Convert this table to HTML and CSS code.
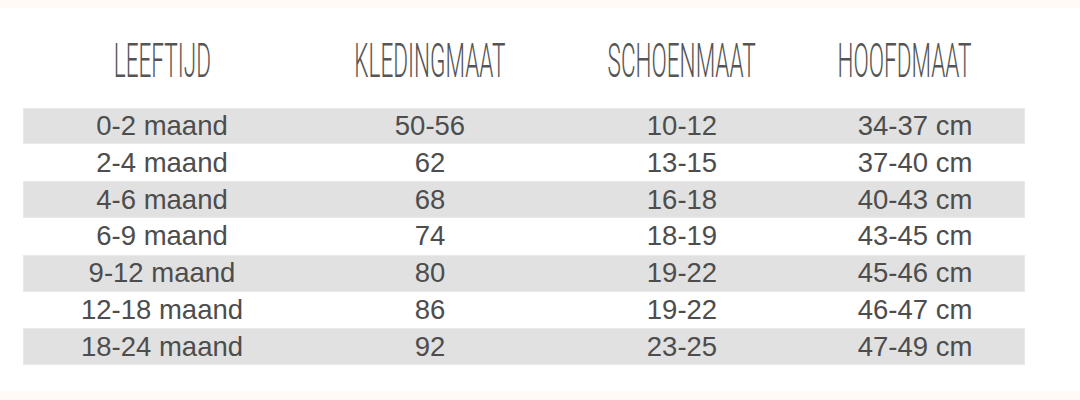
FILE: index.html
```html
<!DOCTYPE html>
<html lang="nl">
<head>
<meta charset="utf-8">
<title>Maattabel</title>
<link rel="stylesheet" href="styles.css">
</head>
<body>
<main class="panel">
  <div class="size-table">
    <div class="row head">
      <div class="cell"><span class="hd">Leeftijd</span></div>
      <div class="cell"><span class="hd">Kledingmaat</span></div>
      <div class="cell"><span class="hd">Schoenmaat</span></div>
      <div class="cell"><span class="hd hd-last">Hoofdmaat</span></div>
    </div>
    <div class="row alt">
      <div class="cell">0-2 maand</div><div class="cell">50-56</div><div class="cell">10-12</div><div class="cell">34-37 cm</div>
    </div>
    <div class="row">
      <div class="cell">2-4 maand</div><div class="cell">62</div><div class="cell">13-15</div><div class="cell">37-40 cm</div>
    </div>
    <div class="row alt">
      <div class="cell">4-6 maand</div><div class="cell">68</div><div class="cell">16-18</div><div class="cell">40-43 cm</div>
    </div>
    <div class="row">
      <div class="cell">6-9 maand</div><div class="cell">74</div><div class="cell">18-19</div><div class="cell">43-45 cm</div>
    </div>
    <div class="row alt">
      <div class="cell">9-12 maand</div><div class="cell">80</div><div class="cell">19-22</div><div class="cell">45-46 cm</div>
    </div>
    <div class="row">
      <div class="cell">12-18 maand</div><div class="cell">86</div><div class="cell">19-22</div><div class="cell">46-47 cm</div>
    </div>
    <div class="row alt">
      <div class="cell">18-24 maand</div><div class="cell">92</div><div class="cell">23-25</div><div class="cell">47-49 cm</div>
    </div>
  </div>
</main>
</body>
</html>
```

FILE: styles.css
```css
html, body {
  margin: 0;
  padding: 0;
}
body {
  background: #fffaf5;
  font-family: "Liberation Sans", Arial, sans-serif;
  color: #4d4d4d;
}
.panel {
  margin-top: 8px;
  height: 383px;
  background: #ffffff;
  box-sizing: border-box;
  padding: 0 55px 0 23px;
}
.size-table {
  display: flex;
  flex-direction: column;
}
.row {
  display: grid;
  grid-template-columns: 278px 258px 246px 220px;
  height: 36.8px;
  align-items: center;
}
.row.alt {
  background: #e1e1e1;
  box-shadow: inset 0 0 0 1px #e9e9e9;
}
.row.head {
  height: 99.6px;
  align-items: start;
}
.cell {
  text-align: center;
  font-size: 27.5px;
  line-height: 30px;
  white-space: nowrap;
}
.head .cell {
  display: flex;
  justify-content: center;
}
.hd {
  display: block;
  flex: none;
  margin-top: 28px;
  font-family: Roboto, "Liberation Sans", sans-serif;
  font-weight: 300;
  text-transform: uppercase;
  font-size: 48px;
  line-height: 50px;
  color: #555555;
  transform: scaleX(0.47);
  transform-origin: center;
}
.hd-last {
  margin-right: 20px;
}
```
